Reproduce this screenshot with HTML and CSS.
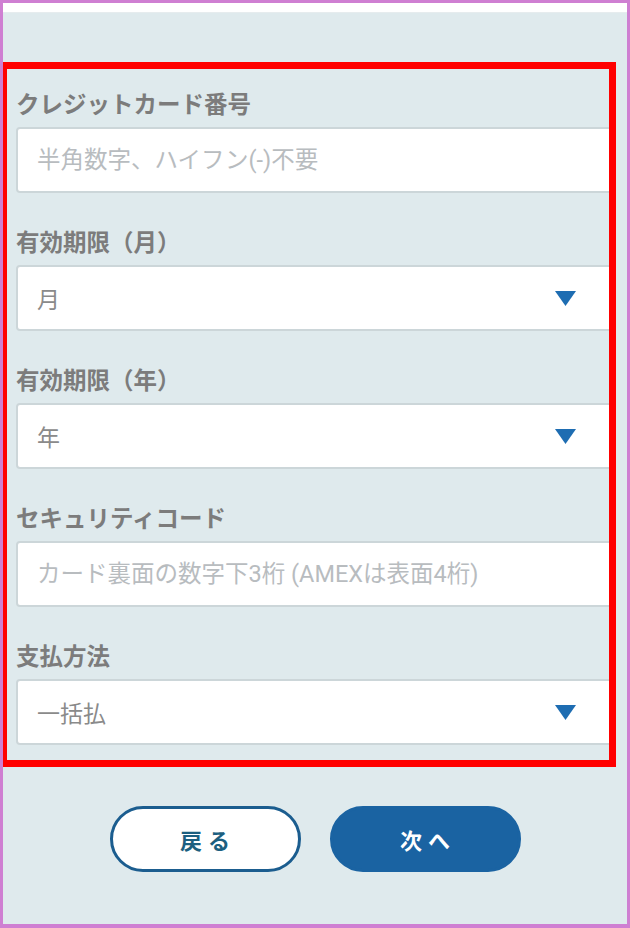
FILE: index.html
```html
<!DOCTYPE html>
<html lang="ja">
<head>
<meta charset="utf-8">
<title>クレジットカード情報</title>
<link rel="stylesheet" href="styles.css">
</head>
<body>
<div class="frame">
  <div class="topbar"></div>
  <form class="form">
    <div class="fields">
      <div class="field">
        <label class="label">クレジットカード番号</label>
        <input class="input" type="text" placeholder="半角数字、ハイフン(-)不要">
      </div>
      <div class="field">
        <label class="label">有効期限（月）</label>
        <div class="input select"><span class="value">月</span><svg class="arrow" width="21" height="15" viewBox="0 0 21 15"><polygon points="0,0 21,0 10.5,15" fill="#1e6db2"/></svg></div>
      </div>
      <div class="field">
        <label class="label">有効期限（年）</label>
        <div class="input select"><span class="value">年</span><svg class="arrow" width="21" height="15" viewBox="0 0 21 15"><polygon points="0,0 21,0 10.5,15" fill="#1e6db2"/></svg></div>
      </div>
      <div class="field">
        <label class="label">セキュリティコード</label>
        <input class="input" type="text" placeholder="カード裏面の数字下3桁 (AMEXは表面4桁)">
      </div>
      <div class="field">
        <label class="label">支払方法</label>
        <div class="input select"><span class="value">一括払</span><svg class="arrow" width="21" height="15" viewBox="0 0 21 15"><polygon points="0,0 21,0 10.5,15" fill="#1e6db2"/></svg></div>
      </div>
    </div>
    <div class="buttons">
      <button type="button" class="btn btn-back">戻る</button>
      <button type="button" class="btn btn-next">次へ</button>
    </div>
  </form>
  <div class="highlight"></div>
</div>
</body>
</html>
```
FILE: styles.css
```css
* { box-sizing: border-box; }
html, body { margin: 0; padding: 0; }
body {
  width: 630px;
  height: 928px;
  font-family: "Noto Sans CJK JP", Roboto, sans-serif;
  background: #fff;
}
.frame {
  position: relative;
  width: 630px;
  height: 928px;
  border: 3px solid #cf7fd2;
  border-bottom-width: 4px;
  background: #dfeaed;
  overflow: hidden;
}
.topbar {
  height: 10px;
  background: #ffffff;
  border-bottom: 1px solid #e6ecee;
}
.form {
  display: flex;
  flex-direction: column;
  padding: 78px 0 0 13px;
}
.fields {
  display: flex;
  flex-direction: column;
  gap: 36px;
}
.field {
  display: flex;
  flex-direction: column;
}
.label {
  font-size: 23.5px;
  line-height: 24px;
  height: 24px;
  font-weight: 700;
  color: #7c7c7c;
  margin-bottom: 12px;
}
.input {
  width: 600px;
  height: 66px;
  border: 2px solid #ccd6d9;
  border-radius: 4px;
  background: #ffffff;
  padding: 0 0 0 19px;
  font-family: Roboto, "Noto Sans CJK JP", sans-serif;
  font-size: 23.5px;
  color: #888888;
  outline: none;
}
.input::placeholder {
  color: #b8bcbf;
}
.select {
  display: flex;
  align-items: center;
  justify-content: space-between;
  padding-right: 38px;
}
.value {
  font-family: "Noto Sans CJK JP", sans-serif;
  font-size: 23px;
  color: #8a8a8a;
}
.arrow { display: block; }
.buttons {
  display: flex;
  justify-content: center;
  gap: 29px;
  margin-top: 61px;
  margin-left: -13px;
}
.btn {
  width: 191px;
  height: 66px;
  border-radius: 33px;
  font-family: "Noto Sans CJK JP", sans-serif;
  font-size: 22px;
  font-weight: 700;
  letter-spacing: 6px;
  padding: 0 0 0 6px;
  cursor: pointer;
}
.btn-back {
  background: #ffffff;
  border: 3px solid #1b5d8f;
  color: #1c5f80;
}
.btn-next {
  background: #1a63a2;
  border: 3px solid #1a63a2;
  color: #ffffff;
}
.highlight {
  position: absolute;
  left: -3px;
  top: 59px;
  width: 616px;
  height: 705px;
  border: 7px solid #ff0000;
  pointer-events: none;
}
```
